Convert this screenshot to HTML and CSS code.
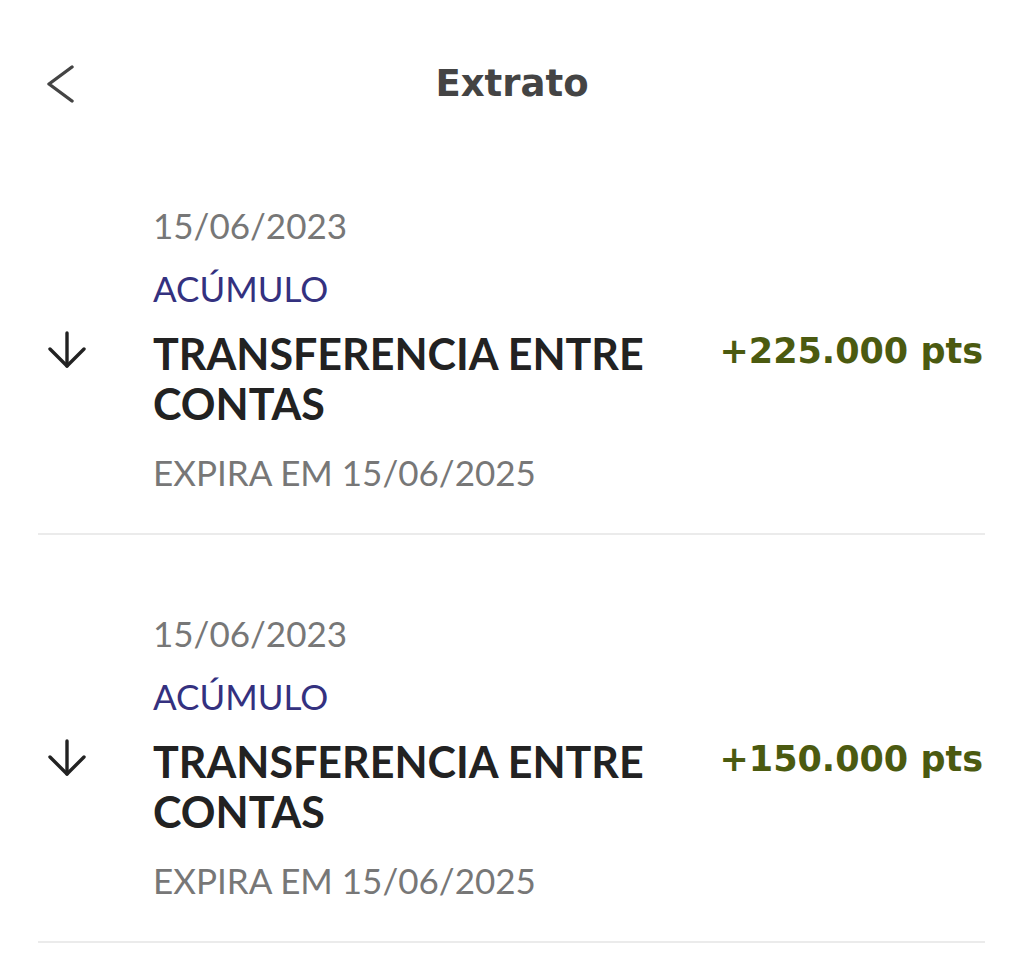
FILE: index.html
```html
<!DOCTYPE html>
<html lang="pt-BR">
<head>
<meta charset="utf-8">
<title>Extrato</title>
<link rel="stylesheet" href="styles.css">
</head>
<body>
<header class="topbar">
  <button class="back" aria-label="Voltar">
    <svg width="30" height="40" viewBox="0 0 30 40" fill="none" stroke="#444" stroke-width="3.4" stroke-linecap="round" stroke-linejoin="round"><polyline points="25,2 2,19 25,36"/></svg>
  </button>
  <h1 class="title">Extrato</h1>
</header>
<main class="list">
  <section class="entry">
    <div class="date">15/06/2023</div>
    <div class="kind">ACÚMULO</div>
    <div class="icon">
      <svg width="40" height="40" viewBox="0 0 40 40" fill="none" stroke="#222" stroke-width="3.4" stroke-linecap="round" stroke-linejoin="round"><line x1="19" y1="2" x2="19" y2="35"/><polyline points="2,18 19,35 36,18"/></svg>
    </div>
    <div class="desc">TRANSFERENCIA ENTRE CONTAS</div>
    <div class="amount">+225.000 pts</div>
    <div class="expiry">EXPIRA EM 15/06/2025</div>
  </section>
  <section class="entry">
    <div class="date">15/06/2023</div>
    <div class="kind">ACÚMULO</div>
    <div class="icon">
      <svg width="40" height="40" viewBox="0 0 40 40" fill="none" stroke="#222" stroke-width="3.4" stroke-linecap="round" stroke-linejoin="round"><line x1="19" y1="2" x2="19" y2="35"/><polyline points="2,18 19,35 36,18"/></svg>
    </div>
    <div class="desc">TRANSFERENCIA ENTRE CONTAS</div>
    <div class="amount">+150.000 pts</div>
    <div class="expiry">EXPIRA EM 15/06/2025</div>
  </section>
</main>
</body>
</html>
```
FILE: styles.css
```css
html, body {
  margin: 0;
  padding: 0;
  background: #fff;
}
body {
  width: 1024px;
  font-family: Lato, "Noto Sans", sans-serif;
}
.topbar {
  position: relative;
  height: 127px;
  box-sizing: border-box;
  padding-top: 60px;
  display: flex;
  justify-content: center;
  align-items: flex-start;
}
.back {
  position: absolute;
  left: 47px;
  top: 65px;
  border: 0;
  background: none;
  padding: 0;
  margin: 0;
  width: 30px;
  height: 40px;
  display: block;
}
.back svg { display: block; }
.title {
  margin: 0;
  font-family: "DejaVu Sans", Verdana, sans-serif;
  font-weight: 700;
  font-size: 37px;
  line-height: 48px;
  color: #444;
}
.list {
  margin: 0 39px 0 38px;
}
.entry {
  display: grid;
  grid-template-columns: 85px 1fr auto;
  column-gap: 20px;
  padding: 76px 2px 39px 10px;
  border-bottom: 2px solid #ebebeb;
}
.date, .kind, .expiry {
  grid-column: 2 / 4;
  font-size: 35px;
  line-height: 44px;
}
.date { color: #777; }
.kind { color: #34317f; margin-top: 19px; }
.icon {
  grid-column: 1;
  grid-row: 3;
  align-self: start;
  margin-top: 21px;
}
.icon svg { display: block; }
.desc {
  grid-column: 2;
  grid-row: 3;
  margin-top: 19px;
  font-weight: 700;
  font-size: 43px;
  line-height: 50px;
  color: #222;
}
.amount {
  grid-column: 3;
  grid-row: 3;
  margin-top: 16px;
  font-family: "DejaVu Sans", Verdana, sans-serif;
  font-weight: 700;
  font-size: 35px;
  line-height: 50px;
  color: #4b5a10;
  white-space: nowrap;
}
.expiry {
  grid-row: 4;
  color: #777;
  margin-top: 21px;
}
```
